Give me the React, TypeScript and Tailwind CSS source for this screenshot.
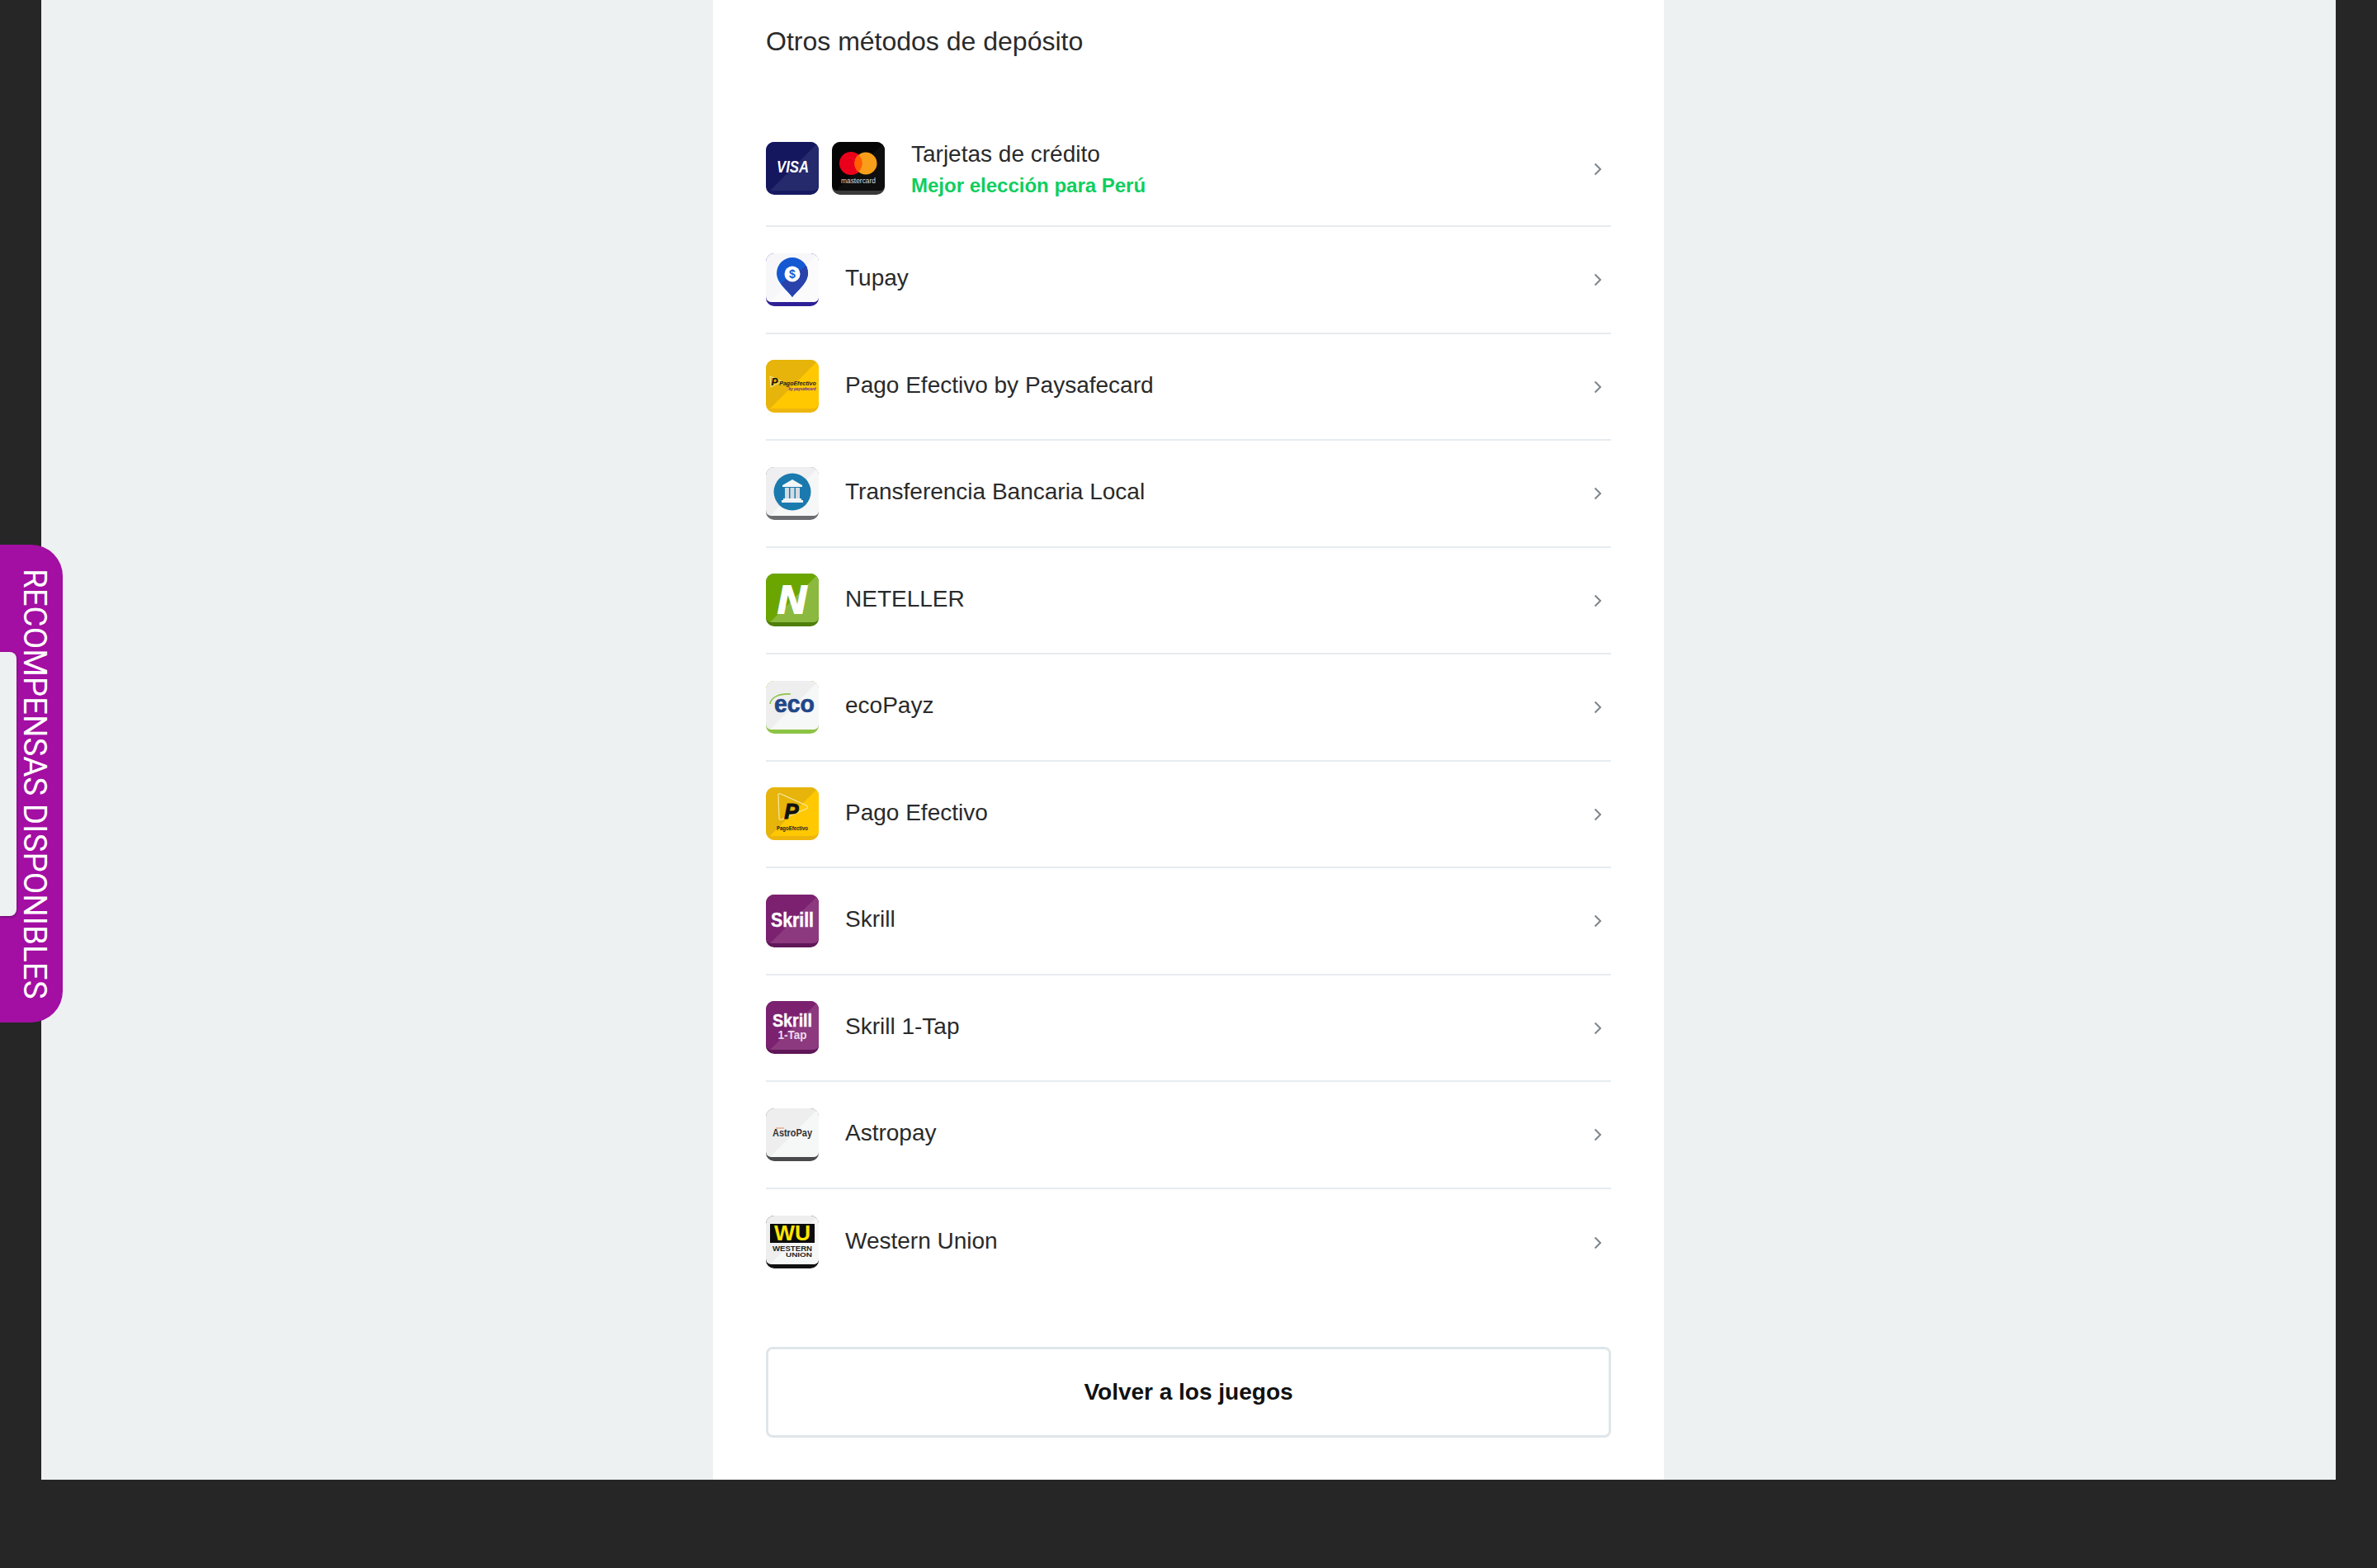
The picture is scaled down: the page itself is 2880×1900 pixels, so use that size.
import { ReactNode } from "react";

const SANS = "'Liberation Sans', Arial, sans-serif";

function Tile({
  id,
  base,
  light,
  edge,
  children,
}: {
  id: string;
  base: string;
  light: string;
  edge: string;
  children?: ReactNode;
}) {
  return (
    <svg width="64" height="64" viewBox="0 0 64 64" className="block shrink-0">
      <defs>
        <clipPath id={id}>
          <rect width="64" height="64" rx="10" />
        </clipPath>
      </defs>
      <g clipPath={`url(#${id})`}>
        <rect width="64" height="64" fill={edge} />
        <path d="M0 0H64V52Q64 59 57 59H7Q0 59 0 52Z" fill={base} />
        <path d="M64 0V52Q64 59 57 59H5Z" fill={light} />
      </g>
      {children}
    </svg>
  );
}

const icons: Record<string, ReactNode> = {
  visa: (
    <Tile id="visa" base="#14165e" light="#252a6c" edge="#171a63">
      <text x="32.5" y="37" textAnchor="middle" fill="#fff" fontFamily={SANS} fontWeight="700" fontStyle="italic" fontSize="19.5" textLength="39" lengthAdjust="spacingAndGlyphs">VISA</text>
    </Tile>
  ),
  mastercard: (
    <Tile id="mc" base="#050505" light="#0e0e0e" edge="#3a3a3a">
      <circle cx="23" cy="26" r="14" fill="#eb001b" />
      <circle cx="41" cy="26" r="13.5" fill="#f79e1b" />
      <path d="M32 15.5a14 14 0 0 1 0 21a14 14 0 0 1 0-21Z" fill="#ff5f00" />
      <text x="32" y="50" textAnchor="middle" fill="#ddd" fontFamily={SANS} fontSize="9" textLength="42" lengthAdjust="spacingAndGlyphs">mastercard</text>
    </Tile>
  ),
  tupay: (
    <Tile id="tupay" base="#f7f7f9" light="#fbfbfc" edge="#2e1f96">
      <path d="M32 53C26 45 13 36 13 24a19 19 0 0 1 38 0C51 36 38 45 32 53Z" fill="#1459d2" />
      <path d="M32 53C27 46 22 41 18 36L49 15C50 18 51 21 51 24C51 36 38 45 32 53Z" fill="#2a42ab" />
      <circle cx="32" cy="25" r="9.5" fill="#fff" />
      <text x="32" y="30" textAnchor="middle" fill="#1459d2" fontFamily={SANS} fontWeight="700" fontSize="14">$</text>
    </Tile>
  ),
  paysafe: (
    <Tile id="paysafe" base="#e6b40a" light="#ffc800" edge="#eeb60c">
      <path d="M5 20L19 26L6 33Z" fill="none" stroke="#f7e9a0" strokeWidth="1" strokeLinejoin="round" />
      <text x="10.5" y="31" textAnchor="middle" fill="#111" fontFamily={SANS} fontWeight="700" fontStyle="italic" fontSize="12">P</text>
      <text x="38.5" y="31" textAnchor="middle" fill="#222" fontFamily={SANS} fontWeight="700" fontStyle="italic" fontSize="7">PagoEfectivo</text>
      <text x="44" y="37" textAnchor="middle" fill="#5b2a9a" fontFamily={SANS} fontWeight="700" fontStyle="italic" fontSize="4.5">by paysafecard</text>
    </Tile>
  ),
  bank: (
    <Tile id="bank" base="#efeef0" light="#f6f7f7" edge="#6b6c70">
      <circle cx="32" cy="30" r="22.5" fill="#1a7aae" />
      <path d="M32 15L44 22V24H20V22Z" fill="#f4f6f8" />
      <rect x="23" y="25" width="5" height="13" fill="#d4dbe3" />
      <rect x="29.5" y="25" width="5" height="13" fill="#d4dbe3" />
      <rect x="36" y="25" width="5" height="13" fill="#d4dbe3" />
      <rect x="21" y="38" width="22" height="2" fill="#f4f6f8" />
      <rect x="19" y="40" width="26" height="3" fill="#eef1f4" />
    </Tile>
  ),
  neteller: (
    <Tile id="neteller" base="#6ba600" light="#8bb93f" edge="#4f7e0b">
      <text x="31.5" y="48" textAnchor="middle" fill="#fff" stroke="#fff" strokeWidth="2" fontFamily={SANS} fontWeight="700" fontStyle="italic" fontSize="48">N</text>
    </Tile>
  ),
  eco: (
    <Tile id="eco" base="#eeeeef" light="#f6f7f7" edge="#8cc445">
      <path d="M5 28C6 20 16 15 30 16" fill="none" stroke="#8cc445" strokeWidth="1.6" />
      <text x="34.5" y="38" textAnchor="middle" fill="#1f4687" stroke="#1f4687" strokeWidth="0.7" fontFamily={SANS} fontWeight="700" fontSize="30" textLength="49" lengthAdjust="spacingAndGlyphs">eco</text>
    </Tile>
  ),
  pagoefectivo: (
    <Tile id="pagoefectivo" base="#e6b40a" light="#ffc800" edge="#eeb60c">
      <path d="M15 10Q14 7 18 8L49 22Q52 24 49 26L19 39Q16 40 16 37Z" fill="none" stroke="#f9e9a6" strokeWidth="1.2" strokeLinejoin="round" />
      <text x="31" y="38" textAnchor="middle" fill="#111" stroke="#111" strokeWidth="1" fontFamily={SANS} fontWeight="700" fontStyle="italic" fontSize="26">P</text>
      <text x="32" y="52" textAnchor="middle" fill="#222" fontFamily={SANS} fontWeight="700" fontSize="7" textLength="38" lengthAdjust="spacingAndGlyphs">PagoEfectivo</text>
    </Tile>
  ),
  skrill: (
    <Tile id="skrill" base="#7b2170" light="#8c397f" edge="#5f1758">
      <text x="32" y="39" textAnchor="middle" fill="#fff" stroke="#fff" strokeWidth="0.4" fontFamily={SANS} fontWeight="700" fontSize="23" textLength="52" lengthAdjust="spacingAndGlyphs">Skrill</text>
    </Tile>
  ),
  skrill1tap: (
    <Tile id="skrill1tap" base="#7b2170" light="#8c397f" edge="#5f1758">
      <text x="32" y="31" textAnchor="middle" fill="#fff" stroke="#fff" strokeWidth="0.4" fontFamily={SANS} fontWeight="700" fontSize="22" textLength="48" lengthAdjust="spacingAndGlyphs">Skrill</text>
      <text x="32" y="46" textAnchor="middle" fill="#eedcec" fontFamily={SANS} fontWeight="700" fontSize="15" textLength="35" lengthAdjust="spacingAndGlyphs">1-Tap</text>
    </Tile>
  ),
  astropay: (
    <Tile id="astropay" base="#eeeeef" light="#f6f7f7" edge="#4a4a4c">
      <path d="M12 24H22" stroke="#e2703a" strokeWidth="0.8" />
      <text x="32" y="34" textAnchor="middle" fill="#333" fontFamily={SANS} fontWeight="700" fontSize="13" textLength="48" lengthAdjust="spacingAndGlyphs">AstroPay</text>
    </Tile>
  ),
  wu: (
    <Tile id="wu" base="#eeeeef" light="#f6f7f7" edge="#111">
      <rect x="5" y="10" width="54" height="23" fill="#0b0b0b" />
      <text x="32" y="30" textAnchor="middle" fill="#ffe600" fontFamily={SANS} fontWeight="700" fontSize="25" textLength="44" lengthAdjust="spacingAndGlyphs">WU</text>
      <text x="32" y="43" textAnchor="middle" fill="#222" fontFamily={SANS} fontWeight="700" fontSize="8.5" textLength="48" lengthAdjust="spacingAndGlyphs">WESTERN</text>
      <text x="40" y="50" textAnchor="middle" fill="#222" fontFamily={SANS} fontWeight="700" fontSize="7.5" textLength="32" lengthAdjust="spacingAndGlyphs">UNION</text>
    </Tile>
  ),
};

const methods = [
  { key: "tupay", label: "Tupay" },
  { key: "paysafe", label: "Pago Efectivo by Paysafecard" },
  { key: "bank", label: "Transferencia Bancaria Local" },
  { key: "neteller", label: "NETELLER" },
  { key: "eco", label: "ecoPayz" },
  { key: "pagoefectivo", label: "Pago Efectivo" },
  { key: "skrill", label: "Skrill" },
  { key: "skrill1tap", label: "Skrill 1-Tap" },
  { key: "astropay", label: "Astropay" },
  { key: "wu", label: "Western Union" },
];

function Chevron() {
  return (
    <svg width="10" height="16" viewBox="0 0 10 16" className="ml-auto mr-[11px] mt-[1px] block shrink-0">
      <polyline points="1.5,1.5 8,8 1.5,14.5" fill="none" stroke="#7d858b" strokeWidth="2" />
    </svg>
  );
}

export default function App() {
  return (
    <div className="relative h-[1900px] overflow-hidden bg-[#262626] font-['Liberation_Sans',Arial,sans-serif] text-[#2a2a2a]">
      <div className="ml-[50px] flex h-[1793px] w-[2780px] justify-center bg-[#edf1f2]">
        <div className="h-full w-[1152px] bg-white px-[64px]">
          <div className="h-[135px] pt-[31px] text-[32px] leading-[38px]">Otros métodos de depósito</div>

          <div className="flex h-[140px] items-center border-b-2 border-[#e6ecf0]">
            {icons.visa}
            <div className="ml-4">{icons.mastercard}</div>
            <div className="ml-8">
              <div className="mt-[1px] text-[28px] leading-[36px]">Tarjetas de crédito</div>
              <div className="mt-[4px] text-[24px] font-bold leading-[32px] text-[#0fce5e]">Mejor elección para Perú</div>
            </div>
            <Chevron />
          </div>

          {methods.map((m, i) => (
            <div
              key={m.key}
              className={`flex h-[129.5px] items-center ${i < methods.length - 1 ? "border-b-2 border-[#e6ecf0]" : ""}`}
            >
              {icons[m.key]}
              <div className="mb-[3px] ml-8 text-[28px] leading-[36px]">{m.label}</div>
              <Chevron />
            </div>
          ))}

          <button className="mt-[62px] h-[110px] w-full rounded-lg border-[3px] border-[#dfe6ea] bg-white pb-[1px] text-[28px] font-bold text-[#111]">
            Volver a los juegos
          </button>
        </div>
      </div>

      {/* rewards tab */}
      <div className="absolute left-0 top-[660px] flex h-[579px] w-[76px] items-center justify-end rounded-r-[38px] bg-[#a30ea3] pr-[12px]">
        <span className="font-['Roboto',sans-serif] text-[38.5px] leading-[44px] text-white [writing-mode:vertical-rl]">
          RECOMPENSAS DISPONIBLES
        </span>
      </div>
      <div className="absolute left-0 top-[790px] h-[320px] w-[20px] rounded-r-lg bg-[#edf1f2] shadow-[0_1px_3px_rgba(0,0,0,0.4)]" />
    </div>
  );
}
